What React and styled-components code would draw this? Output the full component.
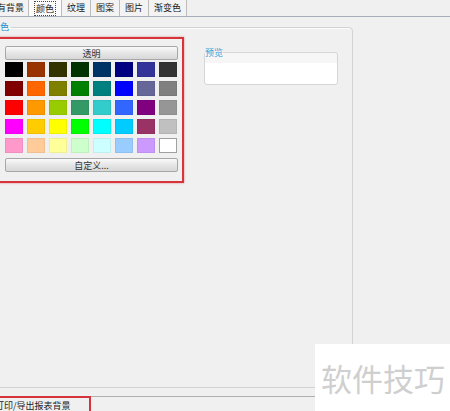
import React from 'react'
import styled, { createGlobalStyle } from 'styled-components'

const GlobalStyle = createGlobalStyle`
  html, body {
    margin: 0;
    padding: 0;
    background: #f0f0f0;
  }
  body {
    width: 450px;
    height: 411px;
    overflow: hidden;
    font-family: "Noto Sans CJK SC", "Noto Sans", sans-serif;
  }
`

const palette = [
  ['#000000', '#993300', '#333300', '#003300', '#003366', '#000080', '#333399', '#333333'],
  ['#800000', '#ff6600', '#808000', '#008000', '#008080', '#0000ff', '#666699', '#808080'],
  ['#ff0000', '#ff9900', '#99cc00', '#339966', '#33cccc', '#3366ff', '#800080', '#969696'],
  ['#ff00ff', '#ffcc00', '#ffff00', '#00ff00', '#00ffff', '#00ccff', '#993366', '#c0c0c0'],
  ['#ff99cc', '#ffcc99', '#ffff99', '#ccffcc', '#ccffff', '#99ccff', '#cc99ff', '#ffffff'],
]

const tabs = ['有背景', '颜色', '纹理', '图案', '图片', '渐变色']

const Page = styled.div`
  position: relative;
  width: 450px;
  height: 411px;
  overflow: hidden;
  background: #f0f0f0;
  color: #222;
`

const TabBar = styled.div`
  display: flex;
  height: 16px;
  border-bottom: 1px solid #a9adb8;
`

const Tab = styled.div`
  height: 16px;
  line-height: 16px;
  font-size: 9px;
  padding: 0 ${p => (p.$active ? 7 : 5)}px;
  border-right: 1px solid #bdbdbd;
  background: ${p => (p.$active ? '#fbfbfb' : '#f3f3f3')};
  white-space: nowrap;
  display: flex;
  align-items: center;
  &:first-child {
    margin-left: -7px;
    padding: 0 4px;
  }
`

const FocusLabel = styled.span`
  outline: 1px dotted #444;
  outline-offset: 1px;
  line-height: 11px;
`

const Body = styled.div`
  height: 375px;
`

const Group = styled.fieldset`
  box-sizing: border-box;
  margin: 4px 0 0 -14px;
  padding: 0;
  width: 367px;
  height: 367px;
  border: 1px solid #d3d3d3;
  border-radius: 4px;
  box-shadow: inset 1px 1px 0 #fbfbfb;
`

const GroupTitle = styled.legend`
  margin-left: 2px;
  padding: 0 2px;
  font-size: 9px;
  line-height: 12px;
  color: #1b8fd6;
`

const Row = styled.div`
  display: flex;
  align-items: flex-start;
  gap: 20px;
  margin: 4px 0 0 9px;
`

const PickerFrame = styled.div`
  width: 188px;
  box-sizing: border-box;
  border: 2px solid #d6343a;
  box-shadow: 0 0 2px rgba(214, 52, 58, 0.55);
  background: #f0f0f0;
  padding: 7px 4px 9px 7px;
  display: flex;
  flex-direction: column;
`

const PaletteButton = styled.div`
  height: 14px;
  line-height: 13px;
  box-sizing: border-box;
  border: 1px solid #a7a7a7;
  border-radius: 2px;
  background: linear-gradient(#fafafa, #e4e4e4 55%, #d8d8d8);
  text-align: center;
  font-size: 9px;
  color: #333;
  margin-top: ${p => p.$gap || 0}px;
`

const SwatchGrid = styled.div`
  display: grid;
  grid-template-columns: repeat(8, 18px);
  grid-auto-rows: 15px;
  column-gap: 4px;
  row-gap: 4px;
  margin-top: 2px;
`

const Swatch = styled.div`
  background: ${p => p.$color};
  box-sizing: border-box;
  border: 1px solid ${p => (p.$color === '#ffffff' ? '#a0a0a0' : 'rgba(0,0,0,0.06)')};
`

const PreviewGroup = styled.fieldset`
  box-sizing: border-box;
  margin: 10px 0 0 0;
  padding: 0;
  width: 134px;
  height: 38px;
  border: 1px solid #d6d6d6;
  border-radius: 3px;
  background: linear-gradient(#f6f6f6 0, #f6f6f6 10px, #ffffff 10px);
`

const PreviewTitle = styled.legend`
  padding: 0;
  font-size: 9px;
  line-height: 11px;
  color: #3aa2d8;
`

const StatusBar = styled.div`
  height: 19px;
  box-sizing: border-box;
  border-top: 1px solid #b0b0b4;
  display: flex;
`

const StatusItem = styled.div`
  margin: -1px 0 0 -8px;
  width: 99px;
  height: 22px;
  box-sizing: border-box;
  border: 2px solid #d6343a;
  padding-left: 1px;
  font-size: 9px;
  line-height: 15px;
  color: #222;
  white-space: nowrap;
`

const Watermark = styled.div`
  position: absolute;
  right: 0;
  bottom: 0;
  width: 135px;
  height: 67px;
  background: #ffffff;
  display: flex;
  align-items: center;
  padding-left: 6px;
  box-sizing: border-box;
  font-size: 31px;
  letter-spacing: 0;
  color: #cfcfcf;
  white-space: nowrap;
`

export default function App() {
  return (
    <Page>
      <GlobalStyle />
      <TabBar>
        {tabs.map(t => (
          <Tab key={t} $active={t === '颜色'}>
            {t === '颜色' ? <FocusLabel>{t}</FocusLabel> : t}
          </Tab>
        ))}
      </TabBar>
      <Body>
        <Group>
          <GroupTitle>颜色</GroupTitle>
          <Row>
            <PickerFrame>
              <PaletteButton>透明</PaletteButton>
              <SwatchGrid>
                {palette.flat().map((c, i) => (
                  <Swatch key={i} $color={c} />
                ))}
              </SwatchGrid>
              <PaletteButton $gap={5}>自定义...</PaletteButton>
            </PickerFrame>
            <PreviewGroup>
              <PreviewTitle>预览</PreviewTitle>
            </PreviewGroup>
          </Row>
        </Group>
      </Body>
      <StatusBar>
        <StatusItem>打印/导出报表背景</StatusItem>
      </StatusBar>
      <Watermark>软件技巧</Watermark>
    </Page>
  )
}
